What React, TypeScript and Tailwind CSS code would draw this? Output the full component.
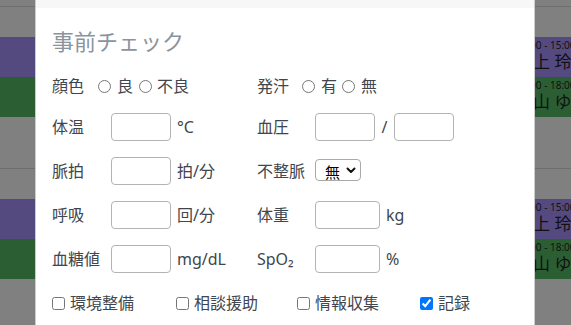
import React from "react";

const font = {
  fontFamily: '"Noto Sans", "Noto Sans CJK JP", sans-serif',
};

function TextInput({ w = "w-[60px]" }: { w?: string }) {
  return (
    <input
      type="text"
      className={`${w} h-[28px] rounded-[4px] border border-[#b3b3b3] bg-white outline-none`}
    />
  );
}

function Radio({ name }: { name: string }) {
  return (
    <input
      type="radio"
      name={name}
      className="m-0 h-[13px] w-[13px]"
    />
  );
}

function Check({ label, checked, w }: { label: string; checked?: boolean; w: string }) {
  return (
    <label className={`${w} flex items-center`}>
      <input type="checkbox" defaultChecked={checked} className="m-0 h-[13px] w-[13px]" />
      <span className="ml-[5px]">{label}</span>
    </label>
  );
}

function EventBar({ color, time, name }: { color: string; time: string; name: string }) {
  return (
    <div className={`h-[40px] ${color} flex flex-col pl-[516px] text-[#111]`}>
      <div className="mt-[2px] text-[10px] leading-[12px] whitespace-nowrap">{time}</div>
      <div className="text-[17px] leading-[22px] whitespace-nowrap">{name}</div>
    </div>
  );
}

export default function App() {
  return (
    <div className="relative w-[571px] h-[325px] overflow-hidden bg-[#808080]" style={font}>
      {/* background calendar (dimmed) */}
      <div className="flex flex-col">
        <div className="h-[6px]" />
        <div className="h-px bg-[#6e6e6e]" />
        <div className="h-[30px]" />
        <EventBar color="bg-[#554a7f]" time="14:00 - 15:00" name="村上 玲子" />
        <EventBar color="bg-[#2b5e33]" time="17:00 - 18:00" name="中山 ゆうこ" />
        <div className="h-[51px]" />
        <div className="h-px bg-[#6e6e6e]" />
        <div className="h-[30px]" />
        <EventBar color="bg-[#554a7f]" time="14:00 - 15:00" name="村上 玲子" />
        <EventBar color="bg-[#2b5e33]" time="17:00 - 18:00" name="中山 ゆうこ" />
      </div>

      {/* modal */}
      <div className="absolute left-[35px] top-0 w-[500px] h-[340px] border-x border-black/20 bg-white">
        <div className="h-[8px] bg-[#f7f7f7]" />
        <div className="px-4 flex flex-col text-[16px] text-[#40464d]">
          <div className="mt-[20px] text-[22px] leading-[26px] text-[#8a949e]">事前チェック</div>

          <div className="mt-[18px] h-[28px] flex items-center">
            <div className="w-[205px] flex items-center">
              <span>顔色</span>
              <span className="ml-[14px] flex items-center"><Radio name="color" /></span>
              <span className="ml-[6px]">良</span>
              <span className="ml-[6px] flex items-center"><Radio name="color" /></span>
              <span className="ml-[5px]">不良</span>
            </div>
            <div className="flex items-center">
              <span>発汗</span>
              <span className="ml-[13px] flex items-center"><Radio name="sweat" /></span>
              <span className="ml-[6px]">有</span>
              <span className="ml-[5px] flex items-center"><Radio name="sweat" /></span>
              <span className="ml-[6px]">無</span>
            </div>
          </div>

          <div className="mt-[13px] flex flex-col gap-4">
            <div className="h-[28px] flex items-center">
              <div className="w-[205px] flex items-center">
                <span className="w-[59px]">体温</span>
                <TextInput />
                <span className="ml-[6px]">°C</span>
              </div>
              <div className="flex items-center">
                <span className="w-[58px]">血圧</span>
                <TextInput />
                <span className="w-[19px] text-center">/</span>
                <TextInput />
              </div>
            </div>

            <div className="h-[28px] flex items-center">
              <div className="w-[205px] flex items-center">
                <span className="w-[59px]">脈拍</span>
                <TextInput />
                <span className="ml-[6px]">拍/分</span>
              </div>
              <div className="flex items-center">
                <span className="w-[58px]">不整脈</span>
                <div className="relative mt-[-3px] h-[22px] w-[46px] rounded-[4px] border border-[#a9a9a9] bg-white">
                  <select className="h-full w-full appearance-none bg-transparent pl-[9px] text-[15px] leading-[20px] text-black outline-none">
                    <option>無</option>
                    <option>有</option>
                  </select>
                  <svg
                    className="pointer-events-none absolute right-[4px] top-[7px]"
                    width="10"
                    height="7"
                    viewBox="0 0 10 7"
                  >
                    <path d="M1.5 1.5 L5 5 L8.5 1.5" fill="none" stroke="#111" strokeWidth="2" strokeLinecap="round" strokeLinejoin="round" />
                  </svg>
                </div>
              </div>
            </div>

            <div className="h-[28px] flex items-center">
              <div className="w-[205px] flex items-center">
                <span className="w-[59px]">呼吸</span>
                <TextInput />
                <span className="ml-[6px]">回/分</span>
              </div>
              <div className="flex items-center">
                <span className="w-[58px]">体重</span>
                <TextInput w="w-[65px]" />
                <span className="ml-[6px]">kg</span>
              </div>
            </div>

            <div className="h-[28px] flex items-center">
              <div className="w-[205px] flex items-center">
                <span className="w-[59px]">血糖値</span>
                <TextInput />
                <span className="ml-[6px]">mg/dL</span>
              </div>
              <div className="flex items-center">
                <span className="w-[58px]">SpO₂</span>
                <TextInput w="w-[65px]" />
                <span className="ml-[6px]">%</span>
              </div>
            </div>

            <div className="h-[28px] flex items-center">
              <Check label="環境整備" w="w-[124px]" />
              <Check label="相談援助" w="w-[121px]" />
              <Check label="情報収集" w="w-[123px]" />
              <Check label="記録" checked w="w-auto" />
            </div>
          </div>
        </div>
      </div>
    </div>
  );
}
